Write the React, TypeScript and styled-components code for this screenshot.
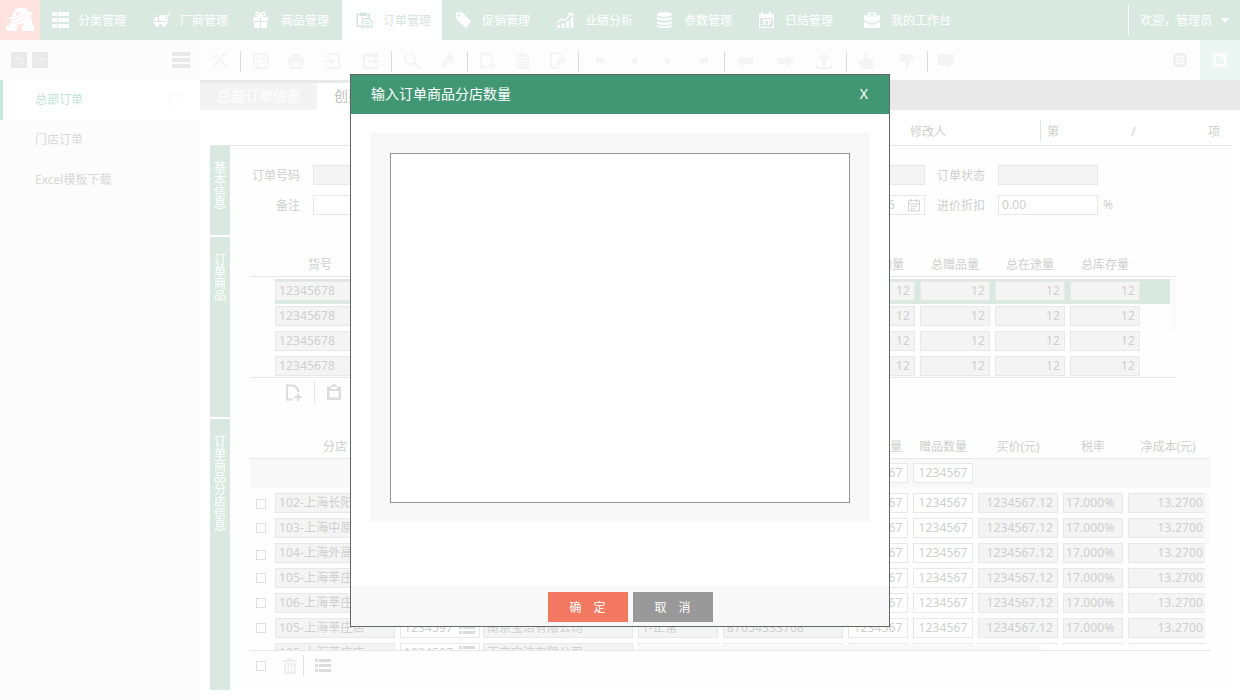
import React from 'react';
import styled, { createGlobalStyle } from 'styled-components';

const c = {
  mint: '#d9e9e1',
  line: '#e8e8e8',
  text: '#cfcfcf',
  field: '#f4f4f4',
  faint: '#f4f4f4',
  soft: '#dcdcdc',
};

const GlobalStyle = createGlobalStyle`
  * { box-sizing: border-box; }
  body {
    margin: 0;
    background: #fff;
    font-family: "Noto Sans", "Noto Sans CJK SC", sans-serif;
    font-size: 12px;
    line-height: 16px;
    color: ${c.text};
  }
`;

/* ---------- icons ---------- */

type IconName =
  | 'list' | 'truck' | 'gift' | 'order' | 'tag' | 'chart' | 'database' | 'calendar' | 'briefcase'
  | 'tools' | 'save' | 'print' | 'import' | 'export' | 'search' | 'brush' | 'docAdd' | 'trash' | 'docEdit'
  | 'first' | 'prev' | 'next' | 'last' | 'left' | 'right' | 'upload' | 'thumbUp' | 'thumbDown' | 'comment'
  | 'menu' | 'heart' | 'expand' | 'collapse' | 'gridView' | 'cardView' | 'clipboard' | 'dateField' | 'rows';

const line = { fill: 'none', stroke: 'currentColor', strokeWidth: 2 } as const;

const shapes: Record<IconName, React.ReactNode> = {
  list: <path d="M0 1h5v4H0zM6 1h11v4H6zM0 7h5v4H0zM6 7h11v4H6zM0 13h5v4H0zM6 13h11v4H6z" />,
  rows: <path d="M1 2h3v3H1zM5 2h12v3H5zM1 7h3v3H1zM5 7h12v3H5zM1 12h3v3H1zM5 12h12v3H5z" />,
  truck: (
    <>
      <path d="M7 4h7v6H7zM2.500 6H6v4H2.500zM1 8.500h1v2H1zM2 11h12.200L15.500 2.500H18v1.400h-1.300L15.300 13H2z" />
      <circle cx="5" cy="13.500" r="2.200" /><circle cx="12" cy="13.500" r="2.200" />
    </>
  ),
  gift: (
    <>
      <path d="M1 6h7v4H1zM9 6h7v4H9zM2 11h6v6H2zM9 11h6v6H9z" />
      <path d="M8.500 5.500C3 5.500 3 1.200 5.500 1.200 7.500 1.200 8.500 5.500 8.500 5.500S9.500 1.200 11.500 1.200C14 1.200 14 5.500 8.500 5.500Z" {...line} strokeWidth={1.5} />
    </>
  ),
  order: (
    <>
      <path d="M6 15H1.200V3.200H13.200V7" {...line} strokeWidth={1.6} />
      <path d="M4 1.500h6.500V5H4z" />
      <path d="M6.700 7.700h6l3.300 3.300v5.300H6.700zM8.500 10.500h4M8.500 12.500h5.500M8.500 14.500h5.500" {...line} strokeWidth={1.2} />
    </>
  ),
  tag: <path fillRule="evenodd" d="M1 1.500h6.500L16 10.500 10.500 17 1.500 8zM4 3a1.400 1.400 0 1 0 .1 0z" />,
  chart: <><path d="M1 14h3v3H1zM5.500 12.500h3V17h-3zM10 10h3v7h-3zM14.500 7h3v10h-3z" /><path d="m1 12 4.500-4L9 9l6.500-6.500M12 2.500h4.500V6" {...line} strokeWidth={1.500} /></>,
  database: <path d="M1 3.500C1 .5 16 .5 16 3.500S1 6.500 1 3.500zM1 5.800c2 2 13 2 15 0v2c0 2.600-15 2.600-15 0zM1 10c2 2 13 2 15 0v2c0 2.600-15 2.600-15 0zM1 14c2 1.600 13 1.600 15 0v1c0 2.600-15 2.600-15 0z" />,
  calendar: (
    <>
      <path fillRule="evenodd" d="M1 3h2V1h2v2h6V1h2v2h3v14H1zM2.200 7v9h12.600V7z" />
      <path d="M4.500 9h2v5.500M8.500 9h4l-2.500 5.500" {...line} strokeWidth={1.8} />
    </>
  ),
  briefcase: <><path d="M6 5V2.200h6V5" {...line} strokeWidth={1.5} /><path d="M1 4.500h16V9l-8 3.500L1 9zM1 10.500l8 3.500 8-3.500V17H1z" /></>,
  tools: <path d="m6 5 10 10M9 8l-6 6M10 4.500c1-2 4-3 5-1M2 6l4-4" {...line} />,
  save: <><path d="M2 2h12l2 2v12H2z" {...line} strokeWidth={1.7} /><path d="M5 2h7v5H5zM5 11h8v5H5z" {...line} strokeWidth={1.2} /></>,
  print: <path fillRule="evenodd" d="M4 2h10v3H4zM1 6h16v7h-3v4H4v-4H1zM5.500 10v5h7v-5z" />,
  import: <><path d="M5 6V2h11v14H5v-3" {...line} /><path d="M0 8.500h7V5l5 4.500L7 14v-3.500H0z" /></>,
  export: <><path d="M15 6V2H2v14h13v-3M2 4h13" {...line} /><path d="M6 8.500h6V6l6 3.500-6 3.500v-2.500H6z" /></>,
  search: <><circle cx="7" cy="7" r="5" {...line} /><path d="m11 11 6 6" {...line} /></>,
  brush: <path d="m10 1 6 4-3 6-6-4zM6 8l5 4-6 5-1-4z" />,
  docAdd: <><path d="M9 15.500H3v-14h7.500l3.500 4V8" {...line} /><path d="M13 9.500h2.200V12h2.500v2.200h-2.500V17H13v-2.800h-2.500V12H13z" /></>,
  trash: <path fillRule="evenodd" d="M6 1h6v2h4v2H2V3h4zM3 6h12v11H3zM5 8v7h1.500V8zM8.200 8v7h1.500V8zM11.500 8v7H13V8z" />,
  docEdit: <><path d="M10 15.500H2v-14h8l3.500 3.500" {...line} /><path d="m7 13 1-4 6-4 3 3-6 5z" /></>,
  first: <path d="M5 5h2v3.500L10 5v3l3-3v8l-3-3v3L7 9.500V13H5z" />,
  prev: <path d="M12 4.500v9L5.500 9z" />,
  next: <path d="M6 4.500v9L12.500 9z" />,
  last: <path d="M13 5h-2v3.500L8 5v3L5 5v8l3-3v3l3-3.500V13h2z" />,
  left: <path d="m0 9 7-6v3h10v6H7v3z" />,
  right: <path d="m18 9-7-6v3H1v6h10v3z" />,
  upload: <path d="m9 1 6 6h-4v6H7V7H3zM1 13h2v2h12v-2h2v4H1z" />,
  thumbUp: <path d="M7 1h3v6h6v8l-2 2H5l-4-7 2-2 3 2z" />,
  thumbDown: <path d="M2 2h14v6h-3v4l-3 5-2-2 1-5H3z" />,
  comment: <path d="M1 2h16v11h-4v4l-5-4H1z" />,
  menu: <path d="M0 1h18v4H0zM0 7h18v4H0zM0 13h18v4H0z" />,
  heart: <path d="M8.500 15.500 2.500 9C-1 4 4.500 0 8.500 5c4-5 9.500-1 6 4z" {...line} strokeWidth={1} />,
  expand: <><path d="M1 1h16v16H1z" /><path d="m4 5 4 4V5M6 10v4m4-7v5h4m-2-5v7" stroke="#f8f8f8" strokeWidth=".8" fill="none" /></>,
  collapse: <><path d="M1 1h16v16H1z" /><path d="M4 7c2-2 4 3 7 1h3" stroke="#f8f8f8" strokeWidth=".9" fill="none" /></>,
  gridView: <path fillRule="evenodd" d="M4 2h10q2 0 2 2v10q0 2-2 2H4q-2 0-2-2V4q0-2 2-2zM5 5v2h3V5zM9 5v2h4V5zM5 8v2h3V8zM9 8v2h4V8zM5 11v2h3v-2zM9 11v2h4v-2z" />,
  cardView: <path fillRule="evenodd" d="M4 2h10q2 0 2 2v10q0 2-2 2H4q-2 0-2-2V4q0-2 2-2zM5 5v8h8V9L9 5z" />,
  clipboard: <path fillRule="evenodd" d="M2 2.500h4Q6.500 0 9 0t3 2.500h4V16H2zM4.500 7v6.500h9V7zM6 3v2h6V3z" />,
  dateField: <><path d="M2 3.500h14v13H2zM2 7.500h14M5.500 1v4M12.500 1v4" {...line} strokeWidth={1.2} /><path d="M5 9.500h2v2H5zM8 9.500h2v2H8zM11 9.500h2v2h-2zM5 12.500h2v2H5zM8 12.500h2v2H8z" /></>,
};

const Svg = styled.svg<{ $size: number; $color?: string }>`
  display: block;
  flex: none;
  width: ${(p) => p.$size}px;
  height: ${(p) => p.$size}px;
  fill: currentColor;
  color: ${(p) => p.$color ?? 'inherit'};
`;

const Icon = ({ name, size = 18, color }: { name: IconName; size?: number; color?: string }) => (
  <Svg viewBox="0 0 18 18" $size={size} $color={color}>{shapes[name]}</Svg>
);

/* ---------- shell ---------- */

const Page = styled.div`
  position: relative;
  display: flex;
  flex-direction: column;
  width: 1240px;
  height: 700px;
  overflow: hidden;
  white-space: nowrap;
`;

const TopNav = styled.nav`
  display: flex;
  flex: none;
  height: 40px;
  background: ${c.mint};
  color: #fff;
`;

const Logo = styled.div`
  display: flex;
  align-items: center;
  justify-content: center;
  width: 40px;
  background: #ffe3e0;
`;

const NavItem = styled.a<{ $width: number; $pad: number; $active?: boolean }>`
  display: flex;
  align-items: center;
  flex: none;
  width: ${(p) => p.$width}px;
  padding-left: ${(p) => p.$pad}px;
  background: ${(p) => (p.$active ? '#fff' : 'transparent')};
  color: ${(p) => (p.$active ? '#d3e6dc' : '#fff')};
`;

const NavIcon = styled.span<{ $width: number }>`
  flex: none;
  width: ${(p) => p.$width}px;
`;

const NavText = styled.span`
  padding-top: 2px;
`;

const User = styled.div`
  display: flex;
  align-items: center;
  gap: 9px;
  height: 30px;
  margin: 5px 0 0 auto;
  padding: 0 11px;
  border-left: 1px solid #fff;
`;

const Caret = styled.span`
  border: 4px solid transparent;
  border-top: 5px solid #fff;
  border-bottom: 0;
`;

const Columns = styled.div`
  display: flex;
  flex: 1;
  min-height: 0;
`;

const Sidebar = styled.aside`
  flex: none;
  width: 200px;
  background: #fcfcfc;
`;

const SideHead = styled.div`
  display: flex;
  align-items: center;
  gap: 3px;
  height: 40px;
  padding: 0 10px;
  color: #e9e9e9;
`;

const Push = styled.span`
  margin-left: auto;
`;

const SideItem = styled.a<{ $active?: boolean }>`
  display: flex;
  align-items: center;
  justify-content: space-between;
  height: 40px;
  padding: 0 16px 1px 32px;
  border-left: 3px solid ${(p) => (p.$active ? '#c6e9dc' : 'transparent')};
  background: ${(p) => (p.$active ? '#fff' : 'transparent')};
  color: ${(p) => (p.$active ? '#c0e6d6' : '#d8d8d8')};
`;

const Main = styled.main`
  display: flex;
  flex-direction: column;
  width: 1040px;
`;

const Toolbar = styled.div`
  display: flex;
  flex: none;
  align-items: center;
  height: 40px;
  padding-top: 2px;
  background: #fdfdfd;
  color: ${c.faint};
`;

const ToolSlot = styled.span<{ $gap: number }>`
  flex: none;
  margin-left: ${(p) => p.$gap}px;
`;

const ToolDivider = styled.span<{ $gap: number }>`
  flex: none;
  width: 1px;
  height: 21px;
  margin-left: ${(p) => p.$gap}px;
  background: #dcdcdc;
`;

const ViewButton = styled.span<{ $active?: boolean }>`
  display: flex;
  align-items: center;
  justify-content: center;
  width: 40px;
  height: 40px;
  margin: -2px 0 0 ${(p) => (p.$active ? '0' : 'auto')};
  background: ${(p) => (p.$active ? '#ecf6f3' : 'transparent')};
  color: ${(p) => (p.$active ? '#fff' : '#f1f1f1')};
`;

const TabBar = styled.div`
  display: flex;
  flex: none;
  height: 30px;
  padding-top: 3px;
  background: #e9e9e9;
  font-size: 14px;
  line-height: 25px;
`;

const Tab = styled.div<{ $active?: boolean }>`
  padding: 0 16px 0 17px;
  background: ${(p) => (p.$active ? '#fff' : '#f3f3f3')};
  color: ${(p) => (p.$active ? '#bdbdbd' : '#fff')};
`;

const MetaRow = styled.div`
  display: flex;
  flex: none;
  align-items: center;
  height: 36px;
  margin: 0 8px 0 10px;
  padding: 6px 12px 0 0;
  border-bottom: 1px solid ${c.line};
`;

const Modifier = styled.span`
  width: 330px;
  margin-left: auto;
  padding: 2px 0 0 200px;
`;

const Pager = styled.div`
  display: flex;
  justify-content: space-between;
  align-items: center;
  width: 180px;
  height: 21px;
  padding: 2px 0 0 6px;
  border-left: 1px solid ${c.mint};
`;

/* ---------- sections ---------- */

const Sections = styled.div`
  display: flex;
  flex-direction: column;
  gap: 2px;
  margin: 0 8px 0 10px;
`;

const Section = styled.section<{ $height: number }>`
  display: flex;
  height: ${(p) => p.$height}px;
`;

const SectionTab = styled.div<{ $top?: number }>`
  flex: none;
  width: 20px;
  padding: ${(p) => p.$top ?? 17}px 4px 0;
  background: ${c.mint};
  color: #fff;
  line-height: 12px;
  white-space: normal;
  word-break: break-all;
`;

const SectionBody = styled.div`
  flex: 1;
  min-width: 0;
  padding-left: 20px;
  background: #fefefe;
`;

const FormGrid = styled.div`
  display: grid;
  grid-template-columns: 50px 13px 499px 113px 60px 13px 100px auto;
  grid-auto-rows: 20px;
  row-gap: 10px;
  padding-top: 19px;
`;

const Label = styled.span`
  padding-top: 3px;
  text-align: right;
`;

const Unit = styled.span`
  padding: 2px 0 0 5px;
`;

const Field = styled.div<{ $column: number; $editable?: boolean; $end?: boolean }>`
  display: flex;
  grid-column: ${(p) => p.$column};
  align-items: center;
  justify-content: ${(p) => (p.$end ? 'flex-end' : 'flex-start')};
  gap: 12px;
  height: 20px;
  padding: 0 3px;
  border: 1px solid ${c.line};
  background: ${(p) => (p.$editable ? '#fff' : c.field)};
  letter-spacing: 0.14px;
`;

const HeadRow = styled.div<{ $width: number; $height: number }>`
  display: flex;
  gap: 5px;
  align-items: flex-end;
  width: ${(p) => p.$width}px;
  height: ${(p) => p.$height}px;
  padding: 0 0 3px 25px;
  border-bottom: 1px solid ${c.line};
`;

const HeadCell = styled.span<{ $width: number }>`
  flex: none;
  width: ${(p) => p.$width}px;
  text-align: center;
`;

const Scroller = styled.div<{ $width: number; $height: number; $top: number }>`
  display: flex;
  justify-content: space-between;
  width: ${(p) => p.$width}px;
  height: ${(p) => p.$height}px;
  padding-top: ${(p) => p.$top}px;
  border-bottom: 1px solid ${c.line};
  overflow: hidden;
`;

const ScrollThumb = styled.span`
  flex: none;
  width: 5px;
  height: 51px;
  background: #fafafa;
`;

const GoodsRow = styled.div<{ $selected?: boolean }>`
  display: flex;
  gap: 5px;
  width: 895px;
  height: 25px;
  margin-left: 25px;
  padding-top: 2px;
  background: ${(p) => (p.$selected ? c.mint : 'transparent')};
`;

const Cell = styled.span<{ $width: number; $align?: string; $editable?: boolean; $pad?: number }>`
  display: flex;
  flex: none;
  align-items: center;
  justify-content: ${(p) => p.$align ?? 'flex-start'};
  width: ${(p) => p.$width}px;
  height: 20px;
  padding: 0 ${(p) => p.$pad ?? 4}px 0 ${(p) => p.$pad ?? 3}px;
  border: 1px solid ${c.line};
  background: ${(p) => (p.$editable ? '#fff' : c.field)};
  letter-spacing: 0.14px;
`;

const VendorCell = styled(Cell)`
  margin-left: -2px;
  letter-spacing: 0;
`;

const SectionTools = styled.div<{ $pad: number; $top: number }>`
  display: flex;
  align-items: center;
  padding: ${(p) => p.$top}px 0 0 ${(p) => p.$pad}px;
  color: ${c.soft};
`;

const SmallDivider = styled.span<{ $before: number; $after: number }>`
  width: 1px;
  height: 21px;
  margin: 0 ${(p) => p.$after}px 0 ${(p) => p.$before}px;
  background: #e2e2e2;
`;

const FilterRow = styled.div`
  display: flex;
  gap: 5px;
  width: 960px;
  height: 29px;
  padding: 4px 0 0 598px;
  background: #f8f8f8;
`;

const StorePane = styled.div`
  display: flex;
  flex-direction: column;
  width: 955px;
  overflow: hidden;
`;

const StoreRow = styled.div`
  display: flex;
  flex: none;
  gap: 5px;
  height: 25px;
`;

const Check = styled.span<{ $shift?: number }>`
  flex: none;
  width: 10px;
  height: 10px;
  margin: ${(p) => 5 + (p.$shift ?? 0)}px 4px 0 6px;
  border: 1px solid #e0e0e0;
  background: #fff;
`;

const LowerPane = styled.div`
  display: flex;
  height: 7px;
  overflow: hidden;
`;

const LowerLeft = styled.div`
  display: flex;
  flex: none;
  gap: 5px;
  width: 388px;
  padding-left: 25px;
`;

const LowerRight = styled.div`
  display: flex;
  flex-direction: column;
  flex: 1;
  min-width: 0;
`;

const CellTops = styled.div`
  display: flex;
  flex: none;
  gap: 5px;
  height: 2px;
  overflow: hidden;
`;

const ScrollBar = styled.span`
  width: 403px;
  height: 5px;
  background: #f8f8f8;
`;

/* ---------- dialog ---------- */

const Dialog = styled.div`
  position: absolute;
  left: 350px;
  top: 74px;
  display: flex;
  flex-direction: column;
  width: 540px;
  height: 553px;
  border: 1px solid #626664;
  background: #fff;
`;

const DialogHead = styled.header`
  display: flex;
  flex: none;
  align-items: center;
  justify-content: space-between;
  height: 39px;
  padding: 0 21px 2px 20px;
  background: #419773;
  color: #fff;
  font-size: 14px;
  line-height: 20px;
`;

const DialogBody = styled.div`
  flex: none;
  height: 389px;
  margin: 19px 19px 64px;
  padding: 20px 20px 19px;
  background: #f8f8f8;
`;

const TextArea = styled.div`
  height: 350px;
  border: 1px solid #979797;
  background: #fff;
`;

const DialogFoot = styled.footer`
  display: flex;
  flex: 1;
  justify-content: center;
  gap: 5px;
  padding: 6px 0 4px 20px;
  background: #f8f8f8;
`;

const Button = styled.button<{ $color: string }>`
  width: 80px;
  height: 30px;
  padding: 0 0 2px;
  border: 0;
  background: ${(p) => p.$color};
  color: #fff;
  font: 12px "Noto Sans CJK SC", sans-serif;
  white-space: pre;
`;

/* ---------- data ---------- */

const navItems: { icon: IconName; label: string; width: number; pad: number; text: number; active?: boolean }[] = [
  { icon: 'list', label: '分类管理', width: 101, pad: 12, text: 38 },
  { icon: 'truck', label: '厂商管理', width: 101, pad: 11, text: 39 },
  { icon: 'gift', label: '商品管理', width: 100, pad: 10, text: 39 },
  { icon: 'order', label: '订单管理', width: 100, pad: 14, text: 41, active: true },
  { icon: 'tag', label: '促销管理', width: 101, pad: 13, text: 40 },
  { icon: 'chart', label: '业绩分析', width: 101, pad: 13, text: 42 },
  { icon: 'database', label: '参数管理', width: 101, pad: 12, text: 40 },
  { icon: 'calendar', label: '日结管理', width: 105, pad: 13, text: 40 },
  { icon: 'briefcase', label: '我的工作台', width: 110, pad: 13, text: 41 },
];

const tools: [IconName | '|', number][] = [
  ['tools', 11], ['|', 11], ['save', 11], ['print', 17], ['import', 18], ['export', 21], ['|', 11],
  ['search', 11], ['brush', 17], ['|', 11], ['docAdd', 10], ['trash', 18], ['docEdit', 17], ['|', 11],
  ['first', 12], ['prev', 16], ['next', 16], ['last', 18], ['|', 11], ['left', 11], ['right', 22],
  ['upload', 21], ['|', 13], ['thumbUp', 10], ['thumbDown', 22], ['|', 12], ['comment', 9],
];

const goodsHeads: [string, number][] = [
  ['货号', 90], ['', 470], ['总订购量', 70], ['总赠品量', 70], ['总在途量', 70], ['总库存量', 70],
];

const stores: [string, number][] = [
  ['102-上海长阳店', 1], ['103-上海中原店', 0], ['104-上海外高桥店', 2],
  ['105-上海莘庄店', 0], ['106-上海莘庄店', 0], ['105-上海莘庄店', 0],
];

const LeadingCells = ({ store }: { store: string }) => (
  <>
    <Cell $width={120}>{store}</Cell>
    <Cell $width={80} $editable $pad={3}>
      1234597<Push><Icon name="rows" color={c.soft} /></Push>
    </Cell>
    <VendorCell $width={150}>南京宝洁有限公司</VendorCell>
  </>
);

export default function App() {
  return (
    <>
      <GlobalStyle />
      <Page>
        <TopNav>
          <Logo>
            <svg width="30" height="26" viewBox="0 0 30 26" fill="#fff">
              <path fillRule="evenodd" d="M9 4 12 1h9l2 3 6 3-4 1 3 10h1v6H17v-5h2l-1-3-7 2v1h2l-2 5H1v-5h3zM12 5l-2 5 6-4zM11 14l6-1-1-2z" />
              <path d="M0 13 8 9v2z" />
              <path d="M5 13c7 0 11-2 14-7l2 1c-2 6-7 9-15 9z" stroke="#ffe3e0" strokeWidth=".8" />
            </svg>
          </Logo>
          {navItems.map((n) => (
            <NavItem key={n.label} $width={n.width} $pad={n.pad} $active={n.active}>
              <NavIcon $width={n.text - n.pad}><Icon name={n.icon} /></NavIcon>
              <NavText>{n.label}</NavText>
            </NavItem>
          ))}
          <User><NavText>欢迎，管理员</NavText><Caret /></User>
        </TopNav>
        <Columns>
          <Sidebar>
            <SideHead>
              <Icon name="expand" /><Icon name="collapse" />
              <Push><Icon name="menu" /></Push>
            </SideHead>
            {['总部订单', '门店订单', 'Excel模板下载'].map((t, i) => (
              <SideItem key={t} $active={i === 0}>{t}<Icon name="heart" size={17} color="#f5f5f5" /></SideItem>
            ))}
          </Sidebar>
          <Main>
            <Toolbar>
              {tools.map(([name, gap], i) =>
                name === '|' ? <ToolDivider key={i} $gap={gap} /> : <ToolSlot key={i} $gap={gap}><Icon name={name} /></ToolSlot>
              )}
              <ViewButton><Icon name="gridView" /></ViewButton>
              <ViewButton $active><Icon name="cardView" /></ViewButton>
            </Toolbar>
            <TabBar>
              <Tab>总部订单信息</Tab>
              <Tab $active>创建</Tab>
            </TabBar>
            <MetaRow>
              <Modifier>修改人</Modifier>
              <Pager><span>第</span><span>/</span><span>项</span></Pager>
            </MetaRow>
            <Sections>
              <Section $height={89}>
                <SectionTab $top={16}>基本信息</SectionTab>
                <SectionBody>
                  <FormGrid>
                    <Label>订单号码</Label><Field $column={3} />
                    <Field $column={4} /><Label>订单状态</Label><Field $column={7} /><span />
                    <Label>备注</Label><Field $column={3} $editable />
                    <Field $column={4} $editable $end>2015-05-06<Icon name="dateField" size={14} /></Field>
                    <Label>进价折扣</Label><Field $column={7} $editable>0.00</Field><Unit>%</Unit>
                  </FormGrid>
                </SectionBody>
              </Section>
              <Section $height={180}>
                <SectionTab>订单商品</SectionTab>
                <SectionBody>
                  <HeadRow $width={926} $height={40}>
                    {goodsHeads.map(([t, w], i) => <HeadCell key={i} $width={w}>{t}</HeadCell>)}
                  </HeadRow>
                  <Scroller $width={926} $height={101} $top={2}>
                    <div>
                      {[0, 1, 2, 3].map((r) => (
                        <GoodsRow key={r} $selected={r === 0}>
                          <Cell $width={90}>12345678</Cell>
                          <Cell $width={470} />
                          {[0, 1, 2, 3].map((k) => <Cell key={k} $width={70} $align="flex-end">12</Cell>)}
                        </GoodsRow>
                      ))}
                    </div>
                    <ScrollThumb />
                  </Scroller>
                  <SectionTools $pad={34} $top={4}>
                    <Icon name="docAdd" />
                    <SmallDivider $before={12} $after={10} />
                    <Icon name="clipboard" />
                  </SectionTools>
                </SectionBody>
              </Section>
              <Section $height={271}>
                <SectionTab>订单商品分店信息</SectionTab>
                <SectionBody>
                  <HeadRow $width={960} $height={40}>
                    <HeadCell $width={120}>分店</HeadCell>
                    <HeadCell $width={443} />
                    <HeadCell $width={60}>订购数量</HeadCell>
                    <HeadCell $width={60}>赠品数量</HeadCell>
                    <HeadCell $width={80}>买价(元)</HeadCell>
                    <HeadCell $width={60}>税率</HeadCell>
                    <HeadCell $width={80}>净成本(元)</HeadCell>
                  </HeadRow>
                  <FilterRow>
                    <Cell $width={60} $align="center" $editable $pad={0}>1234567</Cell>
                    <Cell $width={60} $align="center" $editable $pad={0}>1234567</Cell>
                  </FilterRow>
                  <Scroller $width={960} $height={163} $top={5}>
                    <StorePane>
                      {stores.map(([s, shift], i) => (
                        <StoreRow key={i}>
                          <Check $shift={shift} />
                          <LeadingCells store={s} />
                          <Cell $width={80}>1-正常</Cell>
                          <Cell $width={120}>87654333768</Cell>
                          <Cell $width={60} $align="center" $editable $pad={0}>1234567</Cell>
                          <Cell $width={60} $align="center" $editable $pad={0}>1234567</Cell>
                          <Cell $width={80} $align="flex-end">1234567.12</Cell>
                          <Cell $width={60} $pad={2}>17.000%</Cell>
                          <Cell $width={80} $align="flex-end">13.2700</Cell>
                        </StoreRow>
                      ))}
                      <LowerPane>
                        <LowerLeft><LeadingCells store="105-上海莘庄店" /></LowerLeft>
                        <LowerRight>
                          <CellTops>
                            {[80, 120, 60, 60, 80, 60, 80].map((w, i) => <Cell key={i} $width={w} $editable />)}
                          </CellTops>
                          <ScrollBar />
                        </LowerRight>
                      </LowerPane>
                    </StorePane>
                    <ScrollThumb />
                  </Scroller>
                  <SectionTools $pad={0} $top={4}>
                    <Check $shift={-5} />
                    <ToolSlot $gap={11}><Icon name="trash" color="#efefef" /></ToolSlot>
                    <SmallDivider $before={4} $after={10} />
                    <Icon name="rows" />
                  </SectionTools>
                </SectionBody>
              </Section>
            </Sections>
          </Main>
        </Columns>
        <Dialog>
          <DialogHead><span>输入订单商品分店数量</span><span>X</span></DialogHead>
          <DialogBody><TextArea /></DialogBody>
          <DialogFoot>
            <Button $color="#f47963">确　定</Button>
            <Button $color="#999999">取　消</Button>
          </DialogFoot>
        </Dialog>
      </Page>
    </>
  );
}
